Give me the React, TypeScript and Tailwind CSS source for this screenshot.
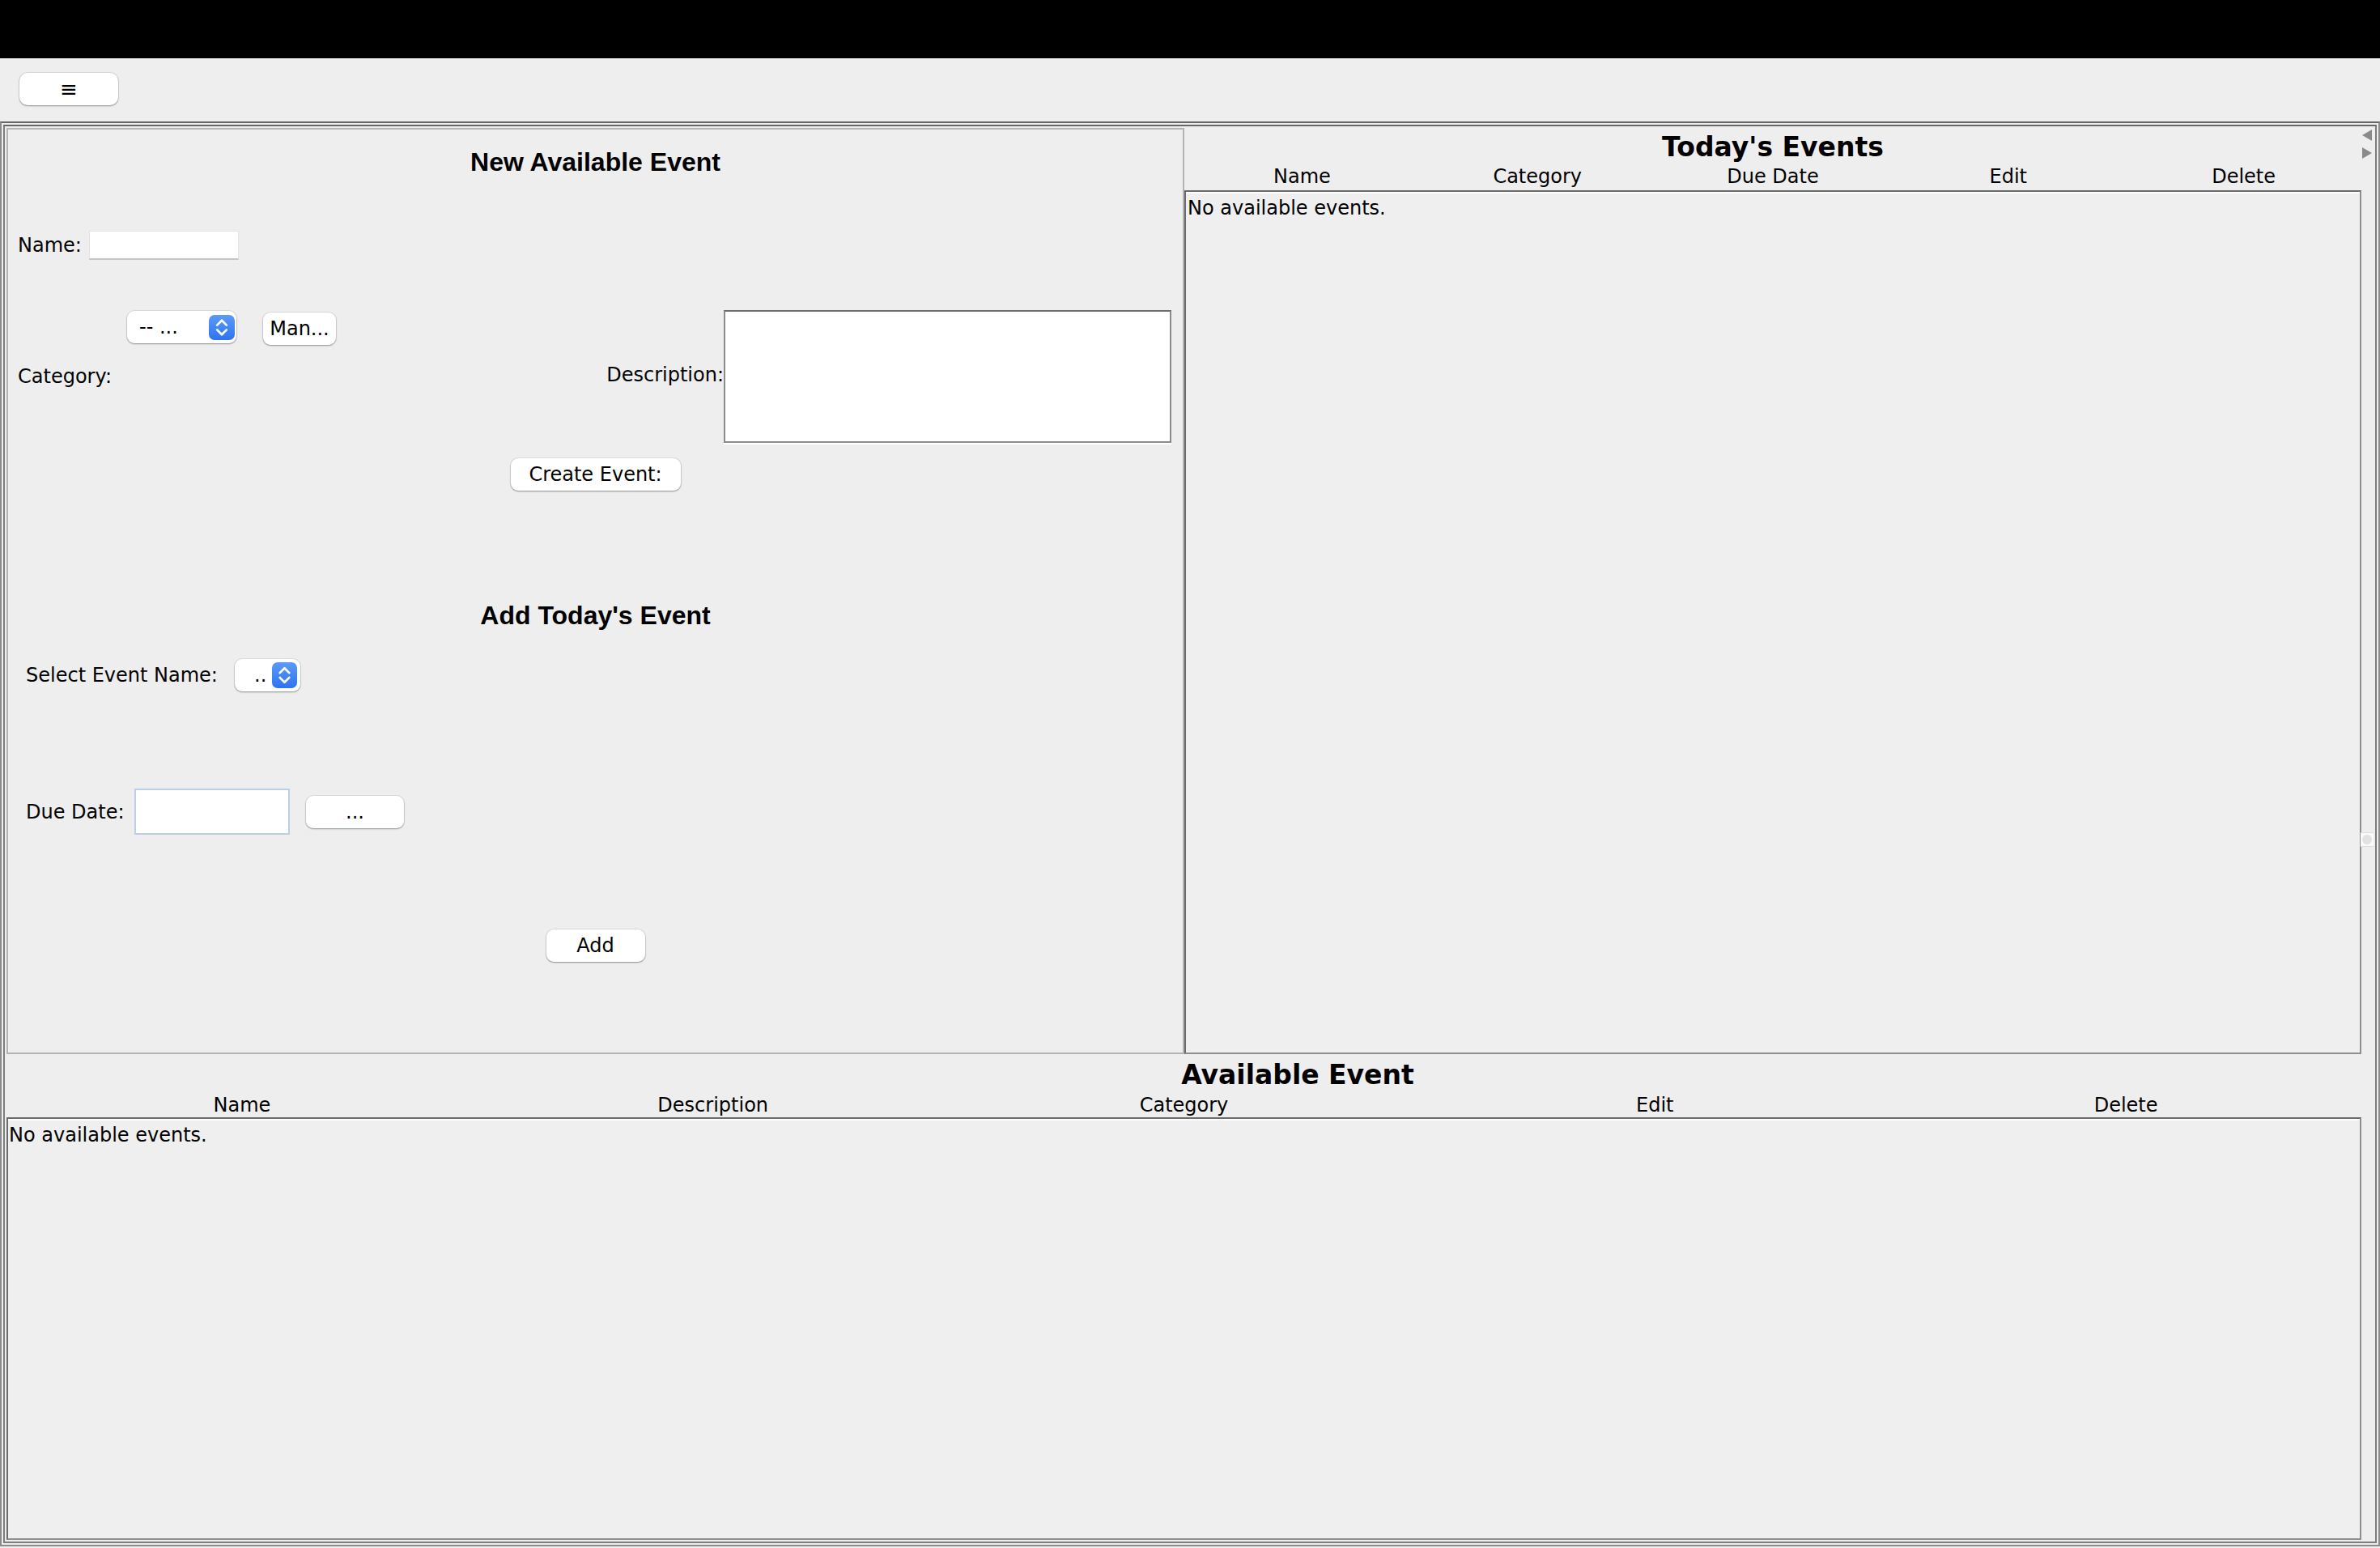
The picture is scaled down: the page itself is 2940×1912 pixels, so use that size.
import React from "react";

function Stepper({ w, h }: { w: number; h: number }) {
  return (
    <div
      className="rounded-[7px] bg-gradient-to-b from-[#5a9bf8] to-[#2f72f0] flex items-center justify-center shrink-0"
      style={{ width: w, height: h }}
    >
      <svg width={w} height={h} viewBox="0 0 32 32" fill="none">
        <path d="M10 13 L16 7 L22 13" stroke="white" strokeWidth="2.8" strokeLinecap="round" strokeLinejoin="round" />
        <path d="M10 19 L16 25 L22 19" stroke="white" strokeWidth="2.8" strokeLinecap="round" strokeLinejoin="round" />
      </svg>
    </div>
  );
}

const surface =
  "bg-white rounded-[9px] shadow-[0_0_0_1px_rgba(0,0,0,0.07),0_1px_2px_rgba(0,0,0,0.35)] flex items-center text-[24px] leading-[28px] text-black shrink-0";
const btn = surface + " justify-center";
const combo = surface + " justify-between";

function TableBox({ children, textPad }: { children?: React.ReactNode; textPad: string }) {
  return (
    <div className="flex-1 border-2 border-[#8e8e8e] border-t-[#6a6a6a] border-l-[#6a6a6a] flex flex-col">
      <div className={"flex-1 border-t-2 border-white bg-[#efefef] text-[24px] leading-[28px] pt-[4px] " + textPad}>
        {children}
      </div>
    </div>
  );
}

export default function App() {
  return (
    <div className="w-[2940px] h-[1912px] bg-[#eeeeee] flex flex-col font-['DejaVu_Sans',sans-serif] text-black overflow-hidden">
      <div className="h-[72px] bg-black shrink-0" />
      <div className="h-[78px] shrink-0 pl-[24px] pt-[18px]">
        <div className={btn + " w-[122px] h-[40px] rounded-[10px] text-[26px]"}>≡</div>
      </div>

      {/* outer split pane */}
      <div className="h-[1760px] w-[2940px] shrink-0 border-2 border-[#8a8a8a] border-t-[#666666] p-[2px]">
        <div className="h-full border-2 border-[#7c7c7c] border-t-[#666666] flex">
          {/* left component */}
          <div className="w-[2911px] flex flex-col pt-[2px] pl-[2px] pb-[2px]">
            {/* top section */}
            <div className="h-[1145px] flex shrink-0">
              {/* New Available Event form */}
              <div className="w-[1455px] h-[1144px] border-2 border-[#b3b3b3] flex flex-col">
                <div className="mt-[21px] h-[38px] leading-[38px] text-center font-['Liberation_Sans',Arial,sans-serif] font-bold text-[32px]">
                  New Available Event
                </div>

                <div className="mt-[66px] flex items-center h-[36px] pl-[12px]">
                  <div className="w-[88px] text-[24px] leading-[28px]">Name:</div>
                  <div className="w-[185px] h-[36px] bg-white border border-[#e2e2e2] border-b-2 border-b-[#c4c4c4]" />
                </div>

                <div className="mt-[62px] h-[164px] flex pr-[14px]">
                  <div className="flex-1 flex flex-col">
                    <div className="mt-[1px] pl-[147px] flex items-start">
                      <div className={combo + " w-[135px] h-[40px] pl-[15px] pr-[2px]"}>
                        <span className="text-[24px]">-- ...</span>
                        <Stepper w={32} h={31} />
                      </div>
                      <div className={btn + " ml-[33px] mt-[2px] w-[90px] h-[40px]"}>Man...</div>
                    </div>
                    <div className="mt-[25px] pl-[12px] text-[24px] leading-[28px]">Category:</div>
                  </div>
                  <div className="self-center text-[24px] leading-[28px] mb-[4px]">Description:</div>
                  <div className="w-[553px] h-[164px] bg-white border-2 border-[#8b8b8b] border-t-[#6c6c6c] shadow-[0_2px_0_#ffffff]" />
                </div>

                <div className={btn + " mt-[19px] mx-auto w-[210px] h-[40px]"}>Create Event:</div>

                <div className="mt-[135px] h-[38px] leading-[38px] text-center font-['Liberation_Sans',Arial,sans-serif] font-bold text-[32px]">
                  Add Today&apos;s Event
                </div>

                <div className="mt-[35px] flex items-center pl-[22px] h-[40px]">
                  <div className="w-[258px] text-[24px] leading-[28px]">Select Event Name:</div>
                  <div className={combo + " w-[81px] h-[40px] pl-[24px] pr-[4px]"}>
                    <span className="text-[24px]">..</span>
                    <Stepper w={31} h={32} />
                  </div>
                </div>

                <div className="mt-[120px] flex items-center pl-[22px] h-[57px]">
                  <div className="w-[134px] text-[24px] leading-[28px]">Due Date:</div>
                  <div className="w-[192px] h-[57px] bg-white border-2 border-[#bccfe6]" />
                  <div className={btn + " ml-[20px] w-[121px] h-[40px]"}>...</div>
                </div>

                <div className={btn + " mt-[117px] mx-auto w-[122px] h-[40px]"}>Add</div>
              </div>

              {/* Today's Events */}
              <div className="flex-1 flex flex-col pb-[1px]">
                <div className="mt-[5px] h-[38px] leading-[38px] text-center font-bold text-[33px]">Today&apos;s Events</div>
                <div className="mt-[3px] grid grid-cols-5 text-center text-[24px] leading-[28px]">
                  <div>Name</div>
                  <div>Category</div>
                  <div>Due Date</div>
                  <div>Edit</div>
                  <div>Delete</div>
                </div>
                <div className="mt-[3px] flex-1 flex flex-col">
                  <TableBox textPad="pl-[2px]">No available events.</TableBox>
                </div>
              </div>
            </div>

            {/* bottom section: Available Event */}
            <div className="flex-1 flex flex-col">
              <div className="mt-[7px] h-[36px] leading-[36px] text-center pl-[281px] font-bold text-[33px]">Available Event</div>
              <div className="mt-[5px] grid grid-cols-5 text-center text-[24px] leading-[28px]">
                <div>Name</div>
                <div>Description</div>
                <div>Category</div>
                <div>Edit</div>
                <div>Delete</div>
              </div>
              <div className="mt-[1px] flex-1 flex flex-col">
                <TableBox textPad="pl-[1px]">No available events.</TableBox>
              </div>
            </div>
          </div>

          {/* split pane divider */}
          <div className="flex-1 flex flex-col items-start pl-[1px]">
            <svg className="mt-[4px]" width="12" height="14" viewBox="0 0 12 14">
              <path d="M12 0 L0 7 L12 14 Z" fill="#8a8a8a" />
            </svg>
            <svg className="mt-[8px]" width="12" height="14" viewBox="0 0 12 14">
              <path d="M0 0 L12 7 L0 14 Z" fill="#8a8a8a" />
            </svg>
            <div className="mt-[832px] -ml-[2px] w-[16px] h-[18px] bg-[#fafafa] border-y border-[#dddddd] flex items-center justify-center">
              <div className="w-[12px] h-[12px] rounded-full bg-[#e2e2e2]" />
            </div>
          </div>
        </div>
      </div>
    </div>
  );
}
